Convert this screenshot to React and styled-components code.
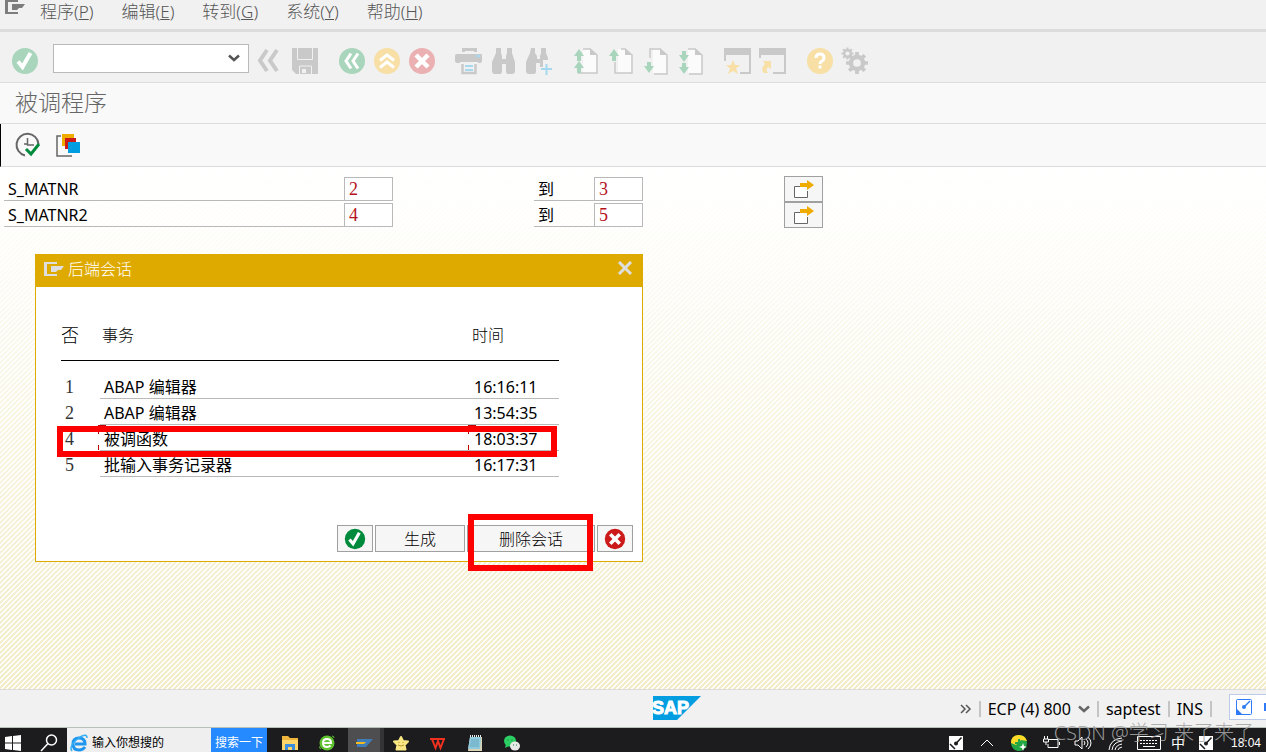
import React, { Component } from 'react'
import styled, { createGlobalStyle, css } from 'styled-components'

const colors = {
  grey: '#c9c9c9',
  green: '#a9d5bc',
  amber: '#f7dfa6',
  pink: '#ebb0b1',
  blue: '#a6d9f0',
  line: '#dcdcdc',
  field: '#b9b9b9',
  bar: '#f1f1f1',
  panel: '#f9f9f9',
  stripe: '#f3edca',
  gold: '#dfaa00',
  red: '#ff0000'
}

const menus = [
  ['程序', 'P'],
  ['编辑', 'E'],
  ['转到', 'G'],
  ['系统', 'Y'],
  ['帮助', 'H']
]

const selections = [
  { name: 'S_MATNR', from: '2', to: '3' },
  { name: 'S_MATNR2', from: '4', to: '5' }
]

const sessions = [
  { no: 1, name: 'ABAP 编辑器', time: '16:16:11' },
  { no: 2, name: 'ABAP 编辑器', time: '13:54:35' },
  { no: 4, name: '被调函数', time: '18:03:37', focused: true },
  { no: 5, name: '批输入事务记录器', time: '16:17:31' }
]

/**
 * ICONS
 */

const CheckShape = ({ color }) => (
  <>
    <circle cx='14' cy='14' r='13' fill={color} />
    <path d='M7 14.500l4.500 5.500 8-14' fill='none' stroke='white' strokeWidth='4' />
  </>
)

const CrossShape = ({ color }) => (
  <>
    <circle cx='14' cy='14' r='13' fill={color} />
    <path d='M8 8l12 12M20 8L8 20' stroke='white' strokeWidth='4.500' />
  </>
)

const PageShape = ({ children, d }) => (
  <>
    <path d='M11 2h7.500l6 6v18H11z' fill='#fbfbfb' />
    <path d={d} fill='none' stroke={colors.grey} strokeWidth='1.500' />
    <path d='M18 1v7h7z' fill={colors.grey} />
    <g fill={colors.green}>{children}</g>
  </>
)

const up = 'l5 7h-3v5h-4v-5h-3z'
const down = 'l-5-7h3v-4h4v4h3z'

const Gear = ({ r }) => (
  <g fill='none' stroke={colors.grey}>
    <circle r={r * 0.55} strokeWidth={r * 0.4} />
    <path
      d={[0, 45, 90, 135, 180, 225, 270, 315]
        .map(a => {
          const x = Math.cos((a * Math.PI) / 180)
          const y = Math.sin((a * Math.PI) / 180)
          return `M${x * r * 0.65} ${y * r * 0.65}L${x * r} ${y * r}`
        })
        .join('')}
      strokeWidth={r * 0.34}
    />
  </g>
)

const toolGroups = [
  [
    {
      label: '隐藏命令',
      icon: <path d='M11 3L4 13.500 11 24M21 3l-7 10.500L21 24' fill='none' stroke={colors.grey} strokeWidth='4' />
    },
    {
      label: '保存',
      icon: (
        <>
          <path d='M1 1h26v26H5l-4-4z' fill={colors.grey} />
          <path d='M6.500 1v11.500h15V1M8.500 27v-8h12v8' fill='none' stroke={colors.bar} />
          <path d='M11 22h4v4h-4z' fill={colors.bar} />
        </>
      )
    }
  ],
  [
    {
      label: '返回',
      icon: (
        <>
          <circle cx='14' cy='14' r='13' fill={colors.green} />
          <path d='M13 6.500L8 14l5 7.500M20 6.500L15 14l5 7.500' fill='none' stroke='white' strokeWidth='3' />
        </>
      )
    },
    {
      label: '退出',
      icon: (
        <>
          <circle cx='14' cy='14' r='13' fill={colors.amber} />
          <path d='M7 13.500L14 8l7 5.500M7 20.500l7-5.500 7 5.500' fill='none' stroke='white' strokeWidth='3' />
        </>
      )
    },
    { label: '取消', icon: <CrossShape color={colors.pink} /> }
  ],
  [
    {
      label: '打印',
      icon: (
        <>
          <path d='M7 1h15v4h-3V4h-9v1H7zM2 7h24q1 0 1 1v6q0 2-2 2h-2v-1H5v1H2q-2 0-2-2V9q0-2 2-2z' fill={colors.grey} />
          <path d='M7.500 17v9h13v-9' fill='none' stroke={colors.grey} strokeWidth='2.500' />
          <path d='M10 18h8v2h-8zM10 22h8v2h-8zM21 8h4v2h-4z' fill={colors.blue} />
        </>
      )
    },
    {
      label: '查找',
      icon: (
        <path d='M6 1h5v5l1 3v3h4V9l1-3V1h5v5l3 9v9q0 3-3 3h-4q-2 0-2-3v-7h-4v7q0 3-2 3H5q-3 0-3-3v-9l4-9z' fill={colors.grey} />
      )
    },
    {
      label: '继续查找',
      icon: (
        <>
          <path d='M6 1h4v5l2 3v3h3V9l1-3V1h5v5l2 5v2h-5v7h-3v-4h-4v8q0 3-2 3H4q-3 0-3-3v-9l4-9z' fill={colors.grey} />
          <path d='M21.500 17v11M16 22h11' stroke={colors.blue} strokeWidth='2' />
        </>
      )
    }
  ],
  [
    {
      label: '第一页',
      icon: (
        <PageShape d='M11 2h7l7 6v18H6'>
          <path d={`M7 2${up}M7 14${up}`} />
        </PageShape>
      )
    },
    {
      label: '上一页',
      icon: (
        <PageShape d='M14 2h4l7 6v18H8V15'>
          <path d={`M7 2${up}`} />
        </PageShape>
      )
    },
    {
      label: '下一页',
      icon: (
        <PageShape d='M8 11V2h10l7 6v19H12'>
          <path d={`M7 26${down}`} />
        </PageShape>
      )
    },
    {
      label: '最后一页',
      icon: (
        <PageShape d='M11 2h7l7 6v19H12'>
          <path d={`M7 15${down}M7 27${down}`} />
        </PageShape>
      )
    }
  ],
  [
    {
      label: '创建会话',
      icon: (
        <>
          <path d='M0 1h27v26H16v-2h9V8H2v6H0z' fill={colors.grey} />
          <path d='M9 13l2 5h5l-4 3.500 2 5.500-5-3-5 3 2-5.500L2 18h5z' fill={colors.amber} />
        </>
      )
    },
    {
      label: '生成快捷方式',
      icon: (
        <>
          <path d='M0 1h27v26H14v-2h11V8H2v3H0z' fill={colors.grey} />
          <path d='M4 14h8v8l-3-2q-3 3 0 6H5q-4-4 1-9z' fill={colors.amber} />
        </>
      )
    }
  ],
  [
    {
      label: '帮助',
      icon: (
        <>
          <circle cx='14' cy='14' r='13' fill={colors.amber} />
          <path d='M10 11q0-4 4-4t4 4q0 2-2 3t-2 3' fill='none' stroke='white' strokeWidth='3' />
          <path d='M12.500 18.500h3v3h-3z' fill='white' />
        </>
      )
    },
    {
      label: '定制本地布局',
      icon: (
        <>
          <g transform='translate(6.500 6.500)'>
            <Gear r={6} />
          </g>
          <g transform='translate(16 16)'>
            <Gear r={11} />
          </g>
        </>
      )
    }
  ]
]

const SessionIcon = ({ color }) => (
  <svg width='20' height='14' viewBox='0 0 20 14' aria-hidden='true'>
    <path d='M0 0h13v2H3v10h10v2H0z' fill={color} />
    <path d='M7 4h13l-3 4h-3l-2 2H7z' fill={color} />
  </svg>
)

const Arrow = ({ color }) => (
  <svg width='12' height='8' viewBox='0 0 12 8' aria-hidden='true'>
    <path d='M1 1.500l5 4.500 5-4.500' fill='none' stroke={color} strokeWidth='2.500' />
  </svg>
)

const NoteIcon = ({ color, back }) => (
  <svg width='16' height='16' viewBox='0 0 16 16' aria-hidden='true'>
    <rect x='.5' y='.5' width='15' height='15' rx='1' fill={back} stroke={color} />
    <path d='M0 9l7 7H0z' fill={color} />
    <path d='M14 2L8 8' stroke={color} strokeWidth='1.500' />
    <circle cx='8' cy='8' r='2' fill={color} />
  </svg>
)

const TrayNote = () => (
  <svg width='14' height='14' viewBox='0 0 14 14' aria-hidden='true'>
    <path d='M0 0h14v14H0z' fill='white' />
    <path d='M12.500 1.500L7 7.500M1 8l5 5' stroke='#1c1c1e' strokeWidth='1.500' />
    <circle cx='7' cy='7.500' r='2' fill='#1c1c1e' />
  </svg>
)

const apps = [
  {
    label: '文件资源管理器',
    icon: (
      <>
        <path d='M1 2h6l2 2h8v12H1z' fill='#f0b53c' />
        <path d='M1 6h16v10H1z' fill='#fcd669' />
        <path d='M4 16v-6h10v6h-3v-3H7v3z' fill='#3b8ede' />
      </>
    )
  },
  {
    label: '浏览器',
    icon: (
      <>
        <circle cx='9' cy='9' r='7.500' fill='#5fc330' />
        <path d='M5 9h8q0-4-4-4T5 9q0 4 4 4 2 0 3.500-1.500' fill='none' stroke='white' strokeWidth='2' />
        <path d='M14 2q2 0 2 2M3 15q-2 0-1-3' stroke='#5fc330' fill='none' />
      </>
    )
  },
  {
    label: 'SAP Logon',
    active: true,
    icon: (
      <>
        <path d='M2 5h16l-7 8H2z' fill='#3f7cb5' />
        <path d='M1 8h10l-2 2H1z' fill='#f5b921' />
      </>
    )
  },
  {
    label: '收藏',
    icon: (
      <>
        <path d='M9 3l2 4 5 .5-3.500 3.500 1 4.500h-9l1-4.500L2 7.500 7 7z' fill='#f9e784' stroke='#f9e784' strokeWidth='2' strokeLinejoin='round' />
        <path d='M6 11q3 2 6 0M7 8v1M11 8v1' stroke='#b99531' fill='none' />
      </>
    )
  },
  {
    label: 'WPS',
    icon: <path d='M1 5h15M3 5l3.500 9L9 7l2.500 7L15 5' fill='none' stroke='#f0311f' strokeWidth='2' />
  },
  {
    label: '记事本',
    icon: (
      <>
        <path d='M4 3h12v14H2z' fill='#d9d3b5' />
        <path d='M4 3h11l-1 12H2z' fill='#8ec9dc' />
        <path d='M4 2h11' stroke='#e9e9e9' strokeWidth='2' strokeDasharray='1 1' />
        <path d='M5 6h8M5 8h8M4 10h9M4 12h9' stroke='#66a9c4' />
      </>
    )
  },
  {
    label: '微信',
    icon: (
      <>
        <ellipse cx='7' cy='7' rx='6' ry='5.500' fill='#2bcf63' />
        <path d='M3 10l-1 4 4-2z' fill='#2bcf63' />
        <ellipse cx='12' cy='12' rx='5' ry='4.500' fill='#e8e8e8' />
        <path d='M4.500 6h1M8.500 6h1M10 11h1M13 11h1' stroke='#1d7a3b' />
      </>
    )
  }
]

const trayIcons = [
  <path key='up' d='M4 13l6-6 6 6' />,
  <g key='guard' stroke='none'>
    <circle cx='10' cy='10' r='8' fill='#22a745' />
    <path d='M2 10q0-8 8-8 6 0 8 6l-6-1-5 5z' fill='#ffd928' />
    <path d='M9 6h2v3h3v2h-3v3H9v-3H6V9h3z' fill='#22a745' />
    <path d='M14 10l1 3 3 1-3 1-1 3-1-3-3-1 3-1z' fill='white' />
  </g>,
  <path key='power' d='M7 6.500h10v8H7V11M18.500 9v3M3.500 3v3M6.500 3v3M2.500 6h5v3h-5zM5 9v3' />,
  <path key='volume' d='M2 8h3l4-4v12l-4-4H2zM11 8q2 2 0 4M13 6q4 4 0 8M15 4q6 6 0 12' />,
  <path key='wifi' d='M4 17Q5 6 17 5M7 17q1-8 10-9M10 17q1-5 7-6M13 17q0-2 4-3' />
]

const SapLogo = () => (
  <svg width='48' height='24' viewBox='0 0 48 24' role='img' aria-label='SAP'>
    <path d='M0 0h48L24 24H0z' fill='#009de0' />
    <text x='-1' y='18' fontFamily='"Liberation Sans", sans-serif' fontSize='18' fontWeight='700' fill='white' stroke='white'>
      SAP
    </text>
  </svg>
)

export default class App extends Component {
  state = { command: '', query: '' }

  onChange = event => {
    const { name, value } = event.target
    this.setState({ [name]: value })
  }

  render() {
    return (
      <Page>
        <GlobalStyle />
        <MenuBar>
          <SessionIcon color='#7d7d7d' />
          {menus.map(([text, key]) => (
            <MenuButton key={key}>
              {text}(<u>{key}</u>)
            </MenuButton>
          ))}
        </MenuBar>

        <Toolbar>
          <IconButton aria-label='确认'>
            <Icon>
              <CheckShape color={colors.green} />
            </Icon>
          </IconButton>
          <CommandBox>
            <input
              name='command'
              aria-label='命令'
              value={this.state.command}
              onChange={this.onChange}
            />
            <button aria-label='历史'>
              <Arrow color='#555' />
            </button>
          </CommandBox>
          <ToolGroups>
            {toolGroups.map((group, i) => (
              <ToolGroup key={i}>
                {group.map(tool => (
                  <IconButton key={tool.label} aria-label={tool.label}>
                    <Icon>{tool.icon}</Icon>
                  </IconButton>
                ))}
              </ToolGroup>
            ))}
          </ToolGroups>
        </Toolbar>

        <TitleBar>
          <h1>被调程序</h1>
        </TitleBar>

        <AppToolbar>
          <IconButton aria-label='执行'>
            <Icon>
              <path d='M11 24.500A11 11 0 1 1 24.500 13' fill='none' stroke='#666' strokeWidth='2' />
              <path d='M13.500 7v7H20M10 13h4' fill='none' stroke='#666' strokeWidth='1.500' />
              <path d='M12 18l5 5 8-10' fill='none' stroke='#008a3b' strokeWidth='3' />
            </Icon>
          </IconButton>
          <IconButton aria-label='获取变式'>
            <Icon>
              <path d='M7 5H3v20h15' fill='none' stroke='#666' strokeWidth='1.500' />
              <path d='M8 3h12v12H8z' fill='#f0ab00' />
              <path d='M11 7h11v11H11z' fill='#cc1919' />
              <path d='M14 11h12v11H14z' fill='#009de0' />
            </Icon>
          </IconButton>
        </AppToolbar>

        <Content>
          {selections.map(row => (
            <SelectionRow key={row.name}>
              <FieldLabel htmlFor={`${row.name}-low`}>{row.name}</FieldLabel>
              <FieldInput id={`${row.name}-low`} defaultValue={row.from} />
              <FieldLabel htmlFor={`${row.name}-high`}>到</FieldLabel>
              <FieldInput id={`${row.name}-high`} defaultValue={row.to} />
              <MoreButton aria-label='多项选择'>
                <svg width='22' height='20' viewBox='0 0 22 20'>
                  <path d='M8 7.500H1.500v11h13V12' fill='white' stroke='#666' />
                  <path d='M7 4h7V1l7 5-7 5V8H7z' fill='#f0ab00' />
                </svg>
              </MoreButton>
            </SelectionRow>
          ))}

          <Dialog role='dialog' aria-labelledby='dialog-title'>
            <DialogHeader>
              <SessionIcon color='#dedede' />
              <h2 id='dialog-title'>后端会话</h2>
              <button aria-label='关闭'>
                <svg width='16' height='16' viewBox='0 0 16 16'>
                  <path d='M2 1l12 12M14 1L2 13' stroke='#dedede' strokeWidth='3' />
                </svg>
              </button>
            </DialogHeader>
            <DialogBody>
              <SessionTable>
                <colgroup>
                  <col width='39' />
                  <col width='370' />
                  <col width='89' />
                </colgroup>
                <thead>
                  <tr>
                    <th>否</th>
                    <th>事务</th>
                    <th>时间</th>
                  </tr>
                </thead>
                <tbody>
                  {sessions.map(row => (
                    <tr key={row.no}>
                      <NumberCell>{row.no}</NumberCell>
                      <SessionCell $focused={row.focused}>{row.name}</SessionCell>
                      <SessionCell $focused={row.focused}>{row.time}</SessionCell>
                    </tr>
                  ))}
                </tbody>
              </SessionTable>
            </DialogBody>
            <DialogFooter>
              <DialogButton aria-label='继续' $width={36}>
                <Icon $size={22}>
                  <CheckShape color='#008a3b' />
                </Icon>
              </DialogButton>
              <DialogButton $width={90}>生成</DialogButton>
              <DialogButton $width={128}>删除会话</DialogButton>
              <DialogButton aria-label='取消' $width={36}>
                <Icon $size={22}>
                  <CrossShape color='#cc1919' />
                </Icon>
              </DialogButton>
            </DialogFooter>
            <RowMark />
            <ButtonMark />
          </Dialog>
        </Content>

        <StatusBar>
          <SapLogo />
          <StatusItems>
            <svg width='12' height='10' viewBox='0 0 12 10' aria-hidden='true'>
              <path d='M1 1l4 4-4 4M6 1l4 4-4 4' fill='none' stroke='#555' strokeWidth='1.500' />
            </svg>
            <Divider />
            <span>ECP (4) 800</span>
            <Arrow color='#666' />
            <Divider />
            <span>saptest</span>
            <Divider />
            <span>INS</span>
            <Divider />
          </StatusItems>
          <FloatingTool>
            <NoteIcon color='#2f7bf5' back='white' />
            <i />
          </FloatingTool>
        </StatusBar>

        <Taskbar>
          <TaskbarInner>
            <StartButton aria-label='开始'>
              <svg width='16' height='16' viewBox='0 0 16 16'>
                <path d='M0 2l7-1v6.500H0zM8 1l8-1v7.500H8zM0 8.500h7V15l-7-1zM8 8.500h8V16l-8-1z' fill='white' />
              </svg>
            </StartButton>
            <StartButton aria-label='搜索' $wide>
              <svg width='18' height='18' viewBox='0 0 18 18' fill='none' stroke='white' strokeWidth='1.500'>
                <circle cx='11.500' cy='6' r='5' />
                <path d='M8 9.500L1 17' />
              </svg>
            </StartButton>
            <SearchBox>
              <svg width='18' height='18' viewBox='0 0 18 18' aria-hidden='true'>
                <path d='M15 13q-2 3-6 3-6 0-6-6t6-6q6 0 6 6H5' fill='none' stroke='#1e96f0' strokeWidth='3' />
                <path d='M2 17Q-2 12 10 3q7-4 7 1' fill='none' stroke='#35aef5' strokeWidth='1.500' />
              </svg>
              <input
                name='query'
                aria-label='搜索内容'
                placeholder='输入你想搜的'
                value={this.state.query}
                onChange={this.onChange}
              />
            </SearchBox>
            <SearchButton>搜索一下</SearchButton>
            <Apps>
              {apps.map(app => (
                <AppButton key={app.label} aria-label={app.label} $active={app.active}>
                  <svg width='18' height='18' viewBox='0 0 18 18'>
                    {app.icon}
                  </svg>
                </AppButton>
              ))}
            </Apps>
            <Tray>
              <TrayNote />
              <TrayIcons>
                {trayIcons.map(icon => (
                  <TrayIcon key={icon.key} viewBox='0 0 20 20'>
                    {icon}
                  </TrayIcon>
                ))}
                <TrayIcon viewBox='0 0 24 20' $wide>
                  <path d='M.5 3.500h23v13H.5zM6 13.500h12' />
                  <path d='M3 7.500h18M3 10.500h18' strokeDasharray='2 1' />
                </TrayIcon>
              </TrayIcons>
              <span>中</span>
              <TrayNote />
              <time>18:04</time>
            </Tray>
          </TaskbarInner>
        </Taskbar>
        <Watermark>CSDN @学习 来了来了</Watermark>
      </Page>
    )
  }
}

/**
 * STYLED COMPONENTS USED IN THIS FILE ARE BELOW HERE
 */

const GlobalStyle = createGlobalStyle`
  * {
    box-sizing: border-box;
  }
  body {
    margin: 0;
    font: 16px/20px 'Noto Sans', 'Noto Sans CJK SC', sans-serif;
    color: black;
  }
  button, input {
    margin: 0;
    padding: 0;
    border: 0;
    font: inherit;
    color: inherit;
    background: none;
    outline: none;
  }
  svg {
    display: block;
    flex: none;
  }
  h1, h2 {
    margin: 0;
    font-weight: 300;
  }
`

const Page = styled.div`
  position: relative;
  display: flex;
  flex-direction: column;
  min-height: 100vh;
  overflow: hidden;
`

const bar = css`
  display: flex;
  align-items: center;
  flex: none;
`

const MenuBar = styled.nav`
  ${bar}
  align-items: flex-start;
  height: 32px;
  padding: 0 5px;
  border-bottom: 3px solid ${colors.line};
  color: #555;
  background: ${colors.bar};
`

const MenuButton = styled.button`
  margin: 2px 13px 0 15px;
  font-size: 17px;
  font-weight: 300;
  white-space: nowrap;
`

const Toolbar = styled.div`
  ${bar}
  height: 51px;
  padding: 8px 11px 0;
  border-bottom: 1px solid ${colors.line};
  background: ${colors.bar};
`

const IconButton = styled.button`
  flex: none;
`

const Icon = styled.svg.attrs({ viewBox: '0 0 28 28', 'aria-hidden': true })`
  width: ${props => props.$size || 28}px;
  height: ${props => props.$size || 28}px;
`

const CommandBox = styled.div`
  display: flex;
  align-items: center;
  width: 196px;
  height: 29px;
  margin: 0 7px 6px 14px;
  border: 1px solid ${colors.field};
  background: white;
  input {
    flex: 1;
    min-width: 0;
    padding: 0 4px;
  }
  button {
    padding: 8px;
  }
`

const ToolGroups = styled.div`
  display: flex;
  gap: 19px;
`

const ToolGroup = styled.div`
  display: flex;
  gap: 7px;
`

const TitleBar = styled.header`
  ${bar}
  height: 41px;
  padding: 0 15px 2px;
  border-bottom: 1px solid ${colors.line};
  background: ${colors.panel};
  h1 {
    font-size: 23px;
    line-height: 30px;
    color: #666;
  }
`

const AppToolbar = styled.div`
  ${bar}
  gap: 12px;
  height: 43px;
  padding: 0 13px;
  border-bottom: 1px solid ${colors.line};
  border-left: 1px solid black;
  background: ${colors.panel};
`

const Content = styled.main`
  position: relative;
  flex: 1 0 522px;
  padding: 9px 4px;
  background-image: linear-gradient(
      white,
      rgba(255, 255, 255, 0.6) 40%,
      rgba(255, 255, 255, 0)
    ),
    linear-gradient(
      135deg,
      ${colors.stripe} 25%,
      white 25%,
      white 50%,
      ${colors.stripe} 50%,
      ${colors.stripe} 75%,
      white 75%
    );
  background-size: 100% 100%, 5px 5px;
`

const SelectionRow = styled.div`
  display: grid;
  grid-template-columns: 340px 190px 60px 190px 39px;
  align-items: center;
  height: 26px;
`

const FieldLabel = styled.label`
  height: 24px;
  padding: 2px 4px 0;
  border-bottom: 1px solid ${colors.field};
`

const FieldInput = styled.input`
  width: 49px;
  height: 24px;
  padding: 0 4px;
  border: 1px solid ${colors.field};
  font-family: 'Liberation Serif', serif;
  font-size: 18px;
  color: #b5121b;
  background: white;
`

const MoreButton = styled.button`
  display: flex;
  align-items: center;
  justify-content: center;
  height: 26px;
  border: 1px solid #a0a0a0;
  background: #f6f6f6;
`

const Dialog = styled.section`
  position: absolute;
  top: 87px;
  left: 35px;
  display: flex;
  flex-direction: column;
  width: 608px;
  border: 1px solid ${colors.gold};
  background: white;
`

const DialogHeader = styled.header`
  ${bar}
  gap: 4px;
  height: 32px;
  padding: 0 9px 4px 8px;
  background: ${colors.gold};
  h2 {
    flex: 1;
    font-size: 16px;
    color: white;
  }
`

const DialogBody = styled.div`
  padding: 22px 25px 48px;
`

const SessionTable = styled.table`
  width: 498px;
  table-layout: fixed;
  border-spacing: 0;
  th {
    height: 52px;
    padding: 0 2px;
    border-bottom: 1px solid black;
    font-weight: 300;
    text-align: left;
  }
  th:first-child {
    padding: 0;
    font-size: 18px;
  }
  tbody::before {
    content: '';
    display: block;
    height: 12px;
  }
`

const NumberCell = styled.td`
  height: 26px;
  padding: 2px 4px 0;
  font-family: 'Liberation Serif', serif;
  font-size: 18px;
  color: #333;
`

const SessionCell = styled.td`
  position: relative;
  height: 26px;
  padding: 3px 4px 0;
  border-bottom: 1px solid ${colors.field};
  ${props =>
    props.$focused &&
    css`
      &::before {
        content: '';
        position: absolute;
        top: 0;
        bottom: 0;
        left: -2px;
        width: 8px;
        border-top: 2px solid #c00000;
        background: linear-gradient(
            #c00000 7px,
            transparent 7px,
            transparent 18px,
            #c00000 18px
          )
          no-repeat 0 0 / 1px 100%;
      }
    `}
`

const DialogFooter = styled.footer`
  display: flex;
  justify-content: flex-end;
  gap: 2px;
  padding: 0 9px 9px;
`

const DialogButton = styled.button`
  display: flex;
  align-items: center;
  justify-content: center;
  width: ${props => props.$width}px;
  height: 27px;
  border: 1px solid #a0a0a0;
  font-weight: 300;
  background: #f6f6f6;
`

const RowMark = styled.div`
  position: absolute;
  top: 171px;
  left: 21px;
  width: 500px;
  height: 31px;
  border: 6px solid ${colors.red};
`

const ButtonMark = styled(RowMark)`
  top: 259px;
  left: 432px;
  width: 125px;
  height: 57px;
`

const StatusBar = styled.footer`
  ${bar}
  position: relative;
  justify-content: flex-end;
  gap: 259px;
  height: 39px;
  padding-right: 54px;
  border-top: 1px solid ${colors.line};
  border-bottom: 1px solid #b9bfb9;
  background: ${colors.bar};
  > svg:first-child {
    margin-bottom: 2px;
  }
`

const StatusItems = styled.div`
  display: flex;
  align-items: center;
  gap: 7px;
  white-space: nowrap;
`

const Divider = styled.i`
  width: 2px;
  height: 16px;
  background: #c4c4c4;
`

const FloatingTool = styled.aside`
  position: absolute;
  top: 4px;
  right: 0;
  display: flex;
  align-items: center;
  justify-content: space-between;
  width: 37px;
  height: 26px;
  padding-left: 6px;
  border: 1px solid #bccbe8;
  border-right: 0;
  background: white;
  i {
    width: 2px;
    height: 8px;
    background: #2f7bf5;
  }
`

const Taskbar = styled.footer`
  flex: none;
  height: 24px;
  overflow: hidden;
  color: white;
  background: #1c1c1e;
`

const TaskbarInner = styled.div`
  display: flex;
  align-items: center;
  height: 30px;
`

const StartButton = styled.button`
  flex: none;
  width: ${props => (props.$wide ? 41 : 26)}px;
  padding-left: ${props => (props.$wide ? 14 : 5)}px;
`

const SearchBox = styled.label`
  ${bar}
  gap: 4px;
  align-self: stretch;
  width: 144px;
  padding-left: 3px;
  color: black;
  background: #efefef;
  input {
    width: 110px;
    font-size: 12px;
  }
  input::placeholder {
    color: black;
    opacity: 1;
  }
`

const SearchButton = styled.button`
  flex: none;
  align-self: stretch;
  width: 56px;
  font-size: 12px;
  background: #2589ff;
`

const Apps = styled.div`
  display: flex;
  align-self: stretch;
  gap: 5px;
  margin-left: 7px;
`

const AppButton = styled.button`
  display: flex;
  align-items: center;
  justify-content: center;
  width: 32px;
  background: ${props => (props.$active ? '#4e4e50' : 'none')};
  box-shadow: ${props => (props.$active ? '4px 0 0 #343436' : 'none')};
`

const Tray = styled.div`
  display: flex;
  align-items: center;
  gap: 14px;
  margin-left: auto;
  padding-right: 5px;
  font-size: 14px;
  > time {
    margin-left: 4px;
    font-family: 'Liberation Sans', sans-serif;
    font-size: 12px;
  }
`

const TrayIcons = styled.div`
  display: flex;
  gap: 12px;
  margin-right: -4px;
`

const TrayIcon = styled.svg`
  width: ${props => (props.$wide ? 24 : 20)}px;
  height: 20px;
  fill: none;
  stroke: white;
`

const Watermark = styled.div`
  position: absolute;
  right: 12px;
  bottom: 6px;
  font-size: 20px;
  font-weight: 300;
  line-height: 26px;
  color: rgba(165, 165, 165, 0.9);
  white-space: nowrap;
`
